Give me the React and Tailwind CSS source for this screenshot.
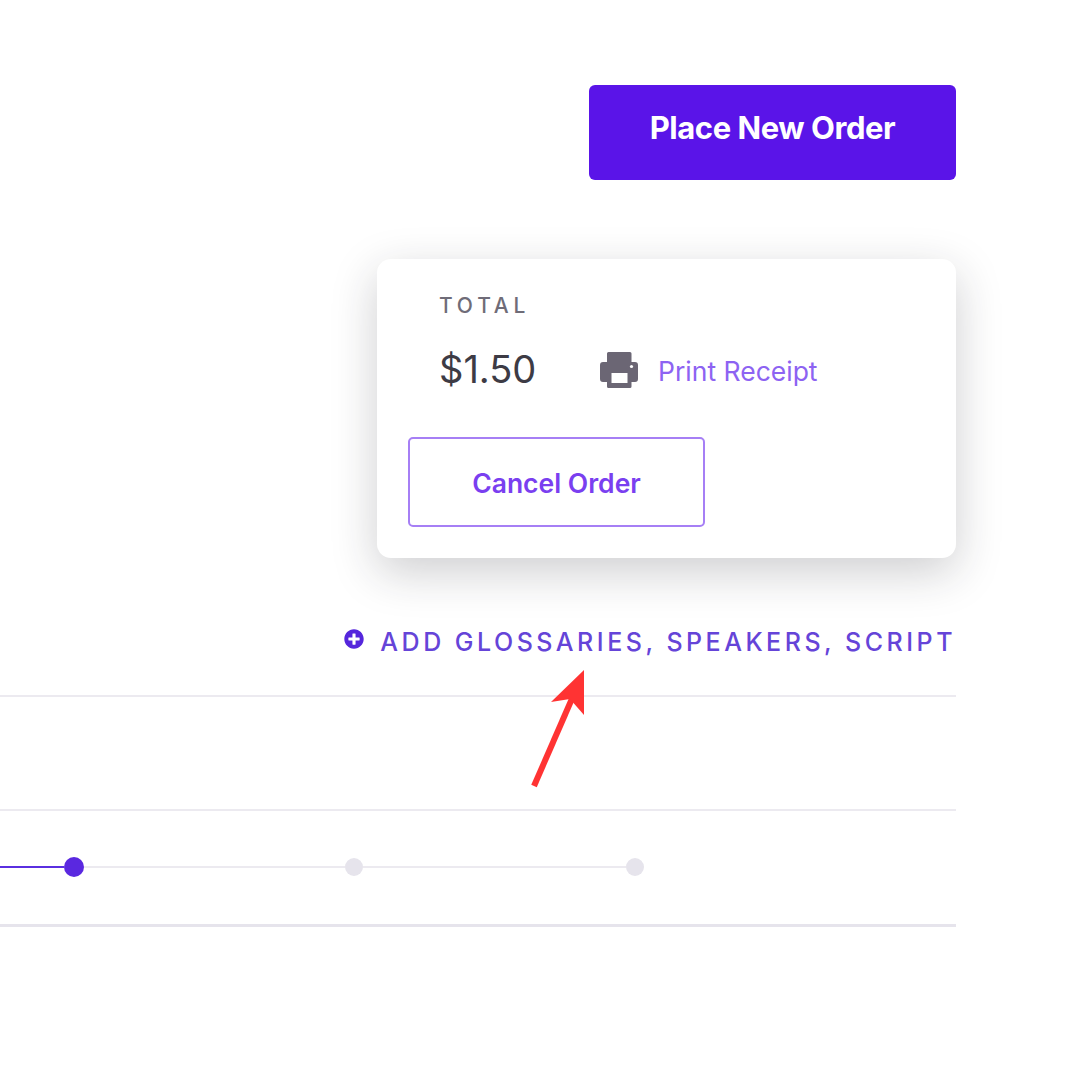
import React from "react";
import { FaPlusCircle } from "react-icons/fa";

function PrinterIcon() {
  return (
    <svg className="mt-[2px] w-[38px] h-[36px] text-[#6b6674]" viewBox="0 0 38 36" aria-hidden="true">
      <path
        fill="currentColor"
        fillRule="evenodd"
        d="M7 1.5 A1.5 1.5 0 0 1 8.5 0 H30 A1.5 1.5 0 0 1 31.5 1.5 V10 H35 A3 3 0 0 1 38 13 V27 A3 3 0 0 1 35 30 H31.5 V34.5 A1.5 1.5 0 0 1 30 36 H8.5 A1.5 1.5 0 0 1 7 34.5 V30 H3 A3 3 0 0 1 0 27 V13 A3 3 0 0 1 3 10 H7 Z M11.5 21 V31 H27.5 V21 Z"
      />
      <circle cx="31.5" cy="14.5" r="1.6" fill="#ffffff" />
    </svg>
  );
}

export default function App() {
  return (
    <div className="relative w-[1080px] h-[1080px] bg-white overflow-hidden font-['Inter','Liberation_Sans',sans-serif] pt-[85px] pr-[124px] flex flex-col items-end">
      <button className="w-[367px] h-[95px] pb-[8px] rounded-[6px] bg-[#5a14e8] text-white text-[31px] font-bold tracking-[-0.45px] flex items-center justify-center">
        Place New Order
      </button>

      <div className="mt-[79px] w-[579px] h-[299px] rounded-[14px] bg-white shadow-[0_14px_46px_rgba(30,30,40,0.22)] pt-[34px] pl-[31px]">
        <div className="pl-[31px] text-[21px] leading-[26px] font-medium tracking-[4.8px] text-[#6f6c78]">TOTAL</div>
        <div className="pl-[31px] mt-[27px] flex items-center h-[46px]">
          <span className="w-[161px] text-[38px] leading-[46px] text-[#3d3b45]">$1.50</span>
          <PrinterIcon />
          <span className="ml-[20px] mt-[5px] text-[26.5px] text-[#8d63f2]">Print Receipt</span>
        </div>
        <button className="mt-[45px] w-[297px] h-[90px] pt-[3px] rounded-[5px] border-2 border-[#a67ff5] bg-white text-[26.5px] font-semibold text-[#7a3ff0] flex items-center justify-center">
          Cancel Order
        </button>
      </div>

      <div className="mt-[67px] h-[34px] flex items-start text-[#6544d8]">
        <FaPlusCircle className="w-[20px] h-[20px] mt-[4px] text-[#5526dc]" />
        <span className="ml-[16px] text-[25px] leading-[34px] font-medium tracking-[3.51px] whitespace-nowrap">ADD GLOSSARIES, SPEAKERS, SCRIPT</span>
      </div>

      <div className="mt-[36px] w-[956px] border-t-2 border-[#eceaf0] h-[114px]" />
      <div className="w-[956px] border-t-2 border-[#eceaf0] h-[115px] pb-[2px] flex items-center">
        <div className="w-[64px] h-[2px] bg-[#5a2fe0]" />
        <div className="w-[20px] h-[20px] rounded-full bg-[#5a28e0]" />
        <div className="w-[261px] h-[2px] bg-[#eceaf0]" />
        <div className="w-[18px] h-[18px] rounded-full bg-[#e6e4ec]" />
        <div className="w-[263px] h-[2px] bg-[#eceaf0]" />
        <div className="w-[18px] h-[18px] rounded-full bg-[#e6e4ec]" />
      </div>
      <div className="w-[956px] border-t-[3px] border-[#e6e4ec]" />

      <svg className="absolute left-[525px] top-[665px] w-[70px] h-[130px]" viewBox="525 665 70 130">
        <line x1="534" y1="786" x2="574" y2="694" stroke="#ff3333" strokeWidth="6" />
        <polygon points="584,670 551,702 570,699 584,715" fill="#ff3333" />
      </svg>
    </div>
  );
}
